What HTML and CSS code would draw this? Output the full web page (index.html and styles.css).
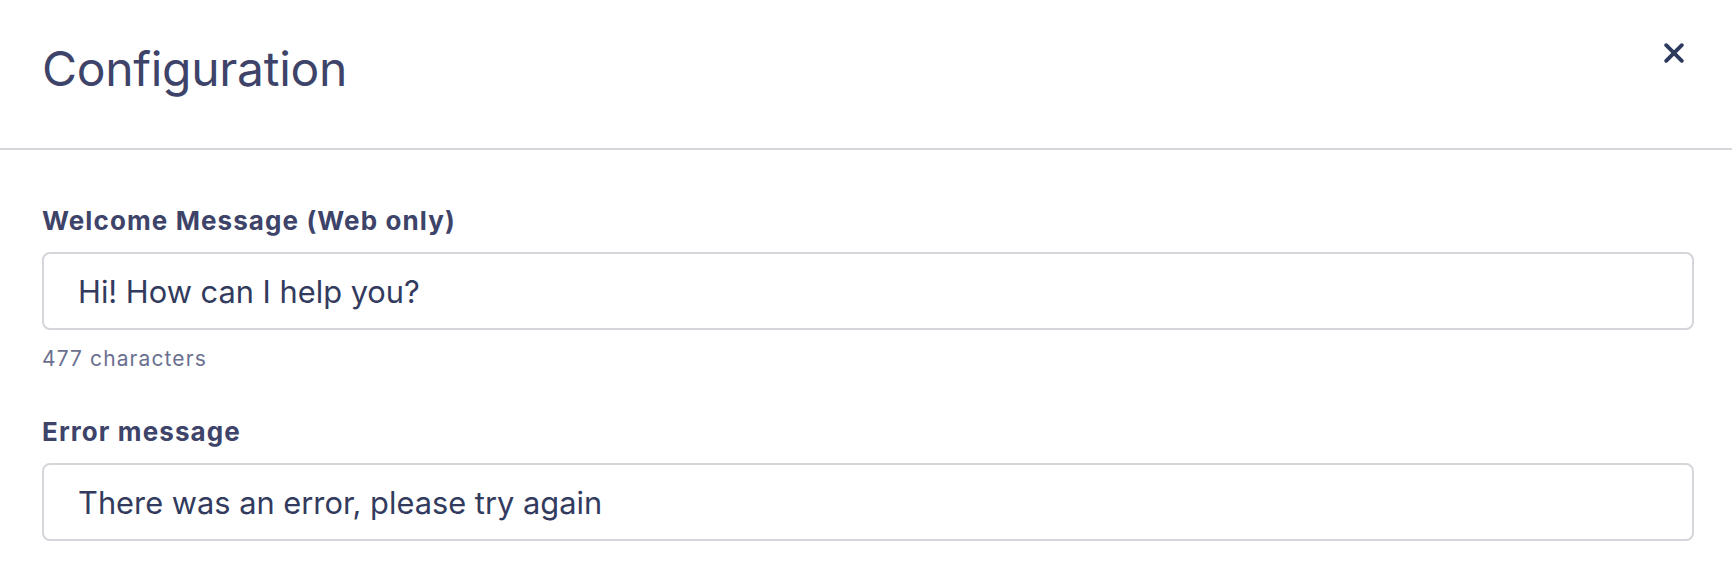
FILE: index.html
```html
<!DOCTYPE html>
<html lang="en">
<head>
<meta charset="utf-8">
<title>Configuration</title>
<link rel="stylesheet" href="styles.css">
</head>
<body>
<div class="panel">
  <header class="header">
    <h1 class="title">Configuration</h1>
    <button class="close" type="button" aria-label="Close">
      <svg width="20" height="20" viewBox="0 0 20 20"><path d="M2.2 2.2 L17.8 17.8 M17.8 2.2 L2.2 17.8" stroke="#2c3a5e" stroke-width="3.8" stroke-linecap="round" fill="none"/></svg>
    </button>
  </header>
  <main class="content">
    <div class="field">
      <label class="label" for="welcome">Welcome Message (Web only)</label>
      <input class="input" id="welcome" type="text" value="Hi! How can I help you?">
      <div class="hint">477 characters</div>
    </div>
    <div class="field">
      <label class="label" for="error">Error message</label>
      <input class="input" id="error" type="text" value="There was an error, please try again">
    </div>
  </main>
</div>
</body>
</html>
```

FILE: styles.css
```css
* { box-sizing: border-box; }
html, body { margin: 0; padding: 0; background: #ffffff; }
body { font-family: Inter, "Noto Sans", sans-serif; }

.panel { width: 100%; }

.header {
  height: 150px;
  display: flex;
  justify-content: space-between;
  align-items: flex-start;
  padding: 40px 48px 0 42px;
  border-bottom: 2px solid #d5d5db;
}

.title {
  margin: 0;
  font-size: 48px;
  line-height: 58px;
  font-weight: 400;
  color: #3e4369;
  letter-spacing: -0.3px;
}

.close {
  margin-top: 3px;
  padding: 0;
  border: 0;
  background: none;
  width: 20px;
  height: 20px;
  display: flex;
}

.content {
  padding: 57px 38px 0 42px;
}

.field { display: flex; flex-direction: column; margin-bottom: 47px; }

.label {
  font-size: 26px;
  line-height: 28px;
  font-weight: 700;
  letter-spacing: 1.1px;
  color: #3e4369;
  margin-bottom: 17px;
}

.input {
  width: 100%;
  height: 78px;
  border: 2px solid #d5d5dc;
  border-radius: 8px;
  padding: 0 0 0 34px;
  font-family: Inter, "Noto Sans", sans-serif;
  font-size: 30.8px;
  color: #323b5e;
  background: #fff;
  outline: none;
}

.hint {
  margin-top: 17px;
  font-size: 21px;
  line-height: 24px;
  letter-spacing: 1.1px;
  color: #6b7090;
}
```
